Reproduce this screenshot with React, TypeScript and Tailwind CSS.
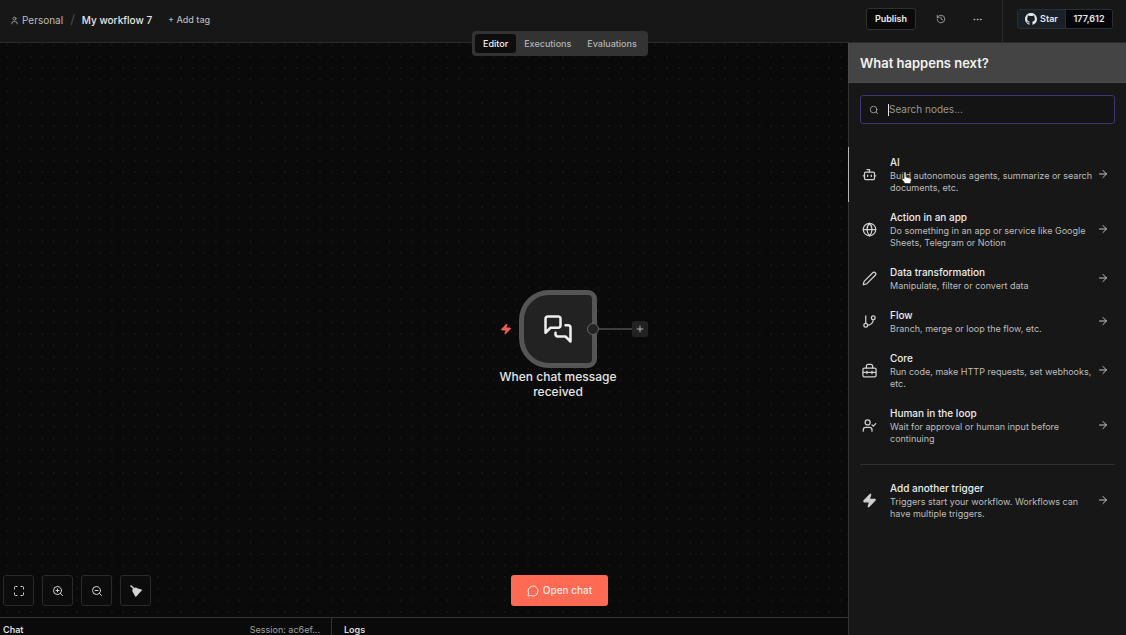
import React from 'react';
import {
  ArrowRight,
  Bot,
  Ellipsis,
  Globe,
  History,
  Maximize,
  MessageCircle,
  Plus,
  Search,
  User,
  UserCheck,
  Zap,
  ZoomIn,
  ZoomOut
} from 'lucide-react';

interface NodeCategory {
  id: string;
  title: string;
  description: string;
  icon: React.ReactNode;
}

interface StrokeIconProps {
  className?: string;
  children: React.ReactNode;
}

const StrokeIcon: React.FC<StrokeIconProps> = ({ className = 'size-[15px]', children }) => (
  <svg
    className={className}
    viewBox="0 0 24 24"
    fill="none"
    stroke="currentColor"
    strokeWidth={2}
    strokeLinecap="round"
    strokeLinejoin="round"
    aria-hidden="true"
  >
    {children}
  </svg>
);

const categories: NodeCategory[] = [
  {
    id: 'ai',
    title: 'AI',
    description: 'Build autonomous agents, summarize or search documents, etc.',
    icon: <Bot className="size-[15px]" />
  },
  {
    id: 'action',
    title: 'Action in an app',
    description: 'Do something in an app or service like Google Sheets, Telegram or Notion',
    icon: <Globe className="size-[15px]" />
  },
  {
    id: 'transform',
    title: 'Data transformation',
    description: 'Manipulate, filter or convert data',
    icon: (
      <StrokeIcon>
        <path d="M21.2 6.8a1 1 0 0 0-4-4L3.8 16.2a2 2 0 0 0-.5.8L2 21.4a.5.5 0 0 0 .6.6L7 20.7a2 2 0 0 0 .8-.5z" />
      </StrokeIcon>
    )
  },
  {
    id: 'flow',
    title: 'Flow',
    description: 'Branch, merge or loop the flow, etc.',
    icon: (
      <StrokeIcon>
        <path d="M6 3v12" />
        <circle cx="18" cy="6" r="3" />
        <circle cx="6" cy="18" r="3" />
        <path d="M18 9a9 9 0 0 1-9 9" />
      </StrokeIcon>
    )
  },
  {
    id: 'core',
    title: 'Core',
    description: 'Run code, make HTTP requests, set webhooks, etc.',
    icon: (
      <StrokeIcon>
        <rect x="1.5" y="8" width="21" height="14" rx="2" />
        <path d="M7 8V5a3 3 0 0 1 3-3h4a3 3 0 0 1 3 3v3" />
        <path d="M2 15h20M8 13v4M16 13v4" />
      </StrokeIcon>
    )
  },
  {
    id: 'human',
    title: 'Human in the loop',
    description: 'Wait for approval or human input before continuing',
    icon: <UserCheck className="size-[15px]" />
  }
];

const triggerCategory: NodeCategory = {
  id: 'trigger',
  title: 'Add another trigger',
  description: 'Triggers start your workflow. Workflows can have multiple triggers.',
  icon: <Zap className="size-[15px]" fill="currentColor" />
};

const CategoryItem: React.FC<{ item: NodeCategory; active?: boolean }> = ({ item, active = false }) => (
  <button
    className={`flex w-full items-center border-l py-2 pr-[17px] pl-[13px] text-left ${
      active ? 'border-[#b5b5b5]' : 'border-[#333333]'
    }`}
  >
    <span className="pb-px text-[#d0d0d0]">{item.icon}</span>
    <span className="ml-[13px] min-w-0 flex-1">
      <span className="block text-[10px] leading-[15px] font-medium text-[#ececec]">{item.title}</span>
      <span className="block text-[9px] leading-[12px] text-[#bdbdbd]">{item.description}</span>
    </span>
    <ArrowRight className="mb-px size-3 shrink-0 text-[#c4c4c4]" />
  </button>
);

const HandCursor: React.FC = () => (
  <svg className="pointer-events-none absolute top-[24px] left-[53px] h-[14px] w-[11px]" viewBox="0 0 22 28" aria-hidden="true">
    <path
      d="M6 3.500C6 1.500 10 1.500 10 3.500V12l8 2c2 .5 3 2 2.500 4L19 25H8L2 17c-1-2 1-3.500 3-2l1 1z"
      fill="#ffffff"
      stroke="#333333"
      strokeWidth="1.500"
    />
  </svg>
);

const NodePanel: React.FC = () => (
  <aside className="flex w-[278px] shrink-0 flex-col bg-[#171717]">
    <h2 className="border-l border-b border-[#4a4a4a] bg-[#444444] px-[11px] pt-[10px] pb-[9px] text-[13px] leading-5 font-semibold text-[#f2f2f2]">
      What happens next?
    </h2>
    <div className="border-l border-[#333333] px-[11px] pt-3 pb-[23px]">
      <label className="relative flex h-[29px] items-center rounded-[3px] border border-[#3d3872] bg-[#141414] px-2">
        <Search className="size-[10px] text-[#a8a8a8]" />
        <span className="ml-[9px] h-3 w-px bg-[#e5e5e5]" />
        <input
          type="text"
          aria-label="Search nodes"
          placeholder="Search nodes..."
          className="min-w-0 flex-1 bg-transparent text-[10px] text-white outline-none placeholder:text-[#969696]"
        />
      </label>
    </div>
    <div className="relative">
      {categories.map((item) => (
        <CategoryItem key={item.id} item={item} active={item.id === 'ai'} />
      ))}
      <HandCursor />
    </div>
    <div className="border-l border-[#333333] px-[11px] pt-[11px] pb-2">
      <hr className="border-[#303030]" />
    </div>
    <CategoryItem item={triggerCategory} />
    <div className="flex-1 border-l border-[#333333]" />
  </aside>
);

const Header: React.FC = () => (
  <header className="flex h-[43px] shrink-0 items-stretch border-b border-[#2b2b2b] bg-[#171717]">
    <div className="flex flex-1 items-center pb-[2px] pl-[10px]">
      <User className="size-[9px] text-[#b5b5b5]" />
      <a href="#personal" className="ml-[3px] text-[10px] text-[#bdbdbd]">Personal</a>
      <span className="mx-[7px] text-[13px] text-[#4a4a4a]">/</span>
      <span className="text-[10px] font-medium text-[#e5e5e5]">My workflow 7</span>
      <button className="ml-4 text-[9px] font-medium text-[#b5b5b5]">+ Add tag</button>
    </div>
    <div className="flex items-center pb-1">
      <button className="h-[22px] w-[50px] rounded-[3px] border border-[#303030] bg-[#0a0a0a] text-[9px] font-semibold text-[#eeeeee]">
        Publish
      </button>
      <button aria-label="Workflow history" className="ml-5 text-[#a8a8a8]">
        <History className="size-[10px]" />
      </button>
      <button aria-label="More actions" className="mr-[19px] ml-[26px] text-[#b5b5b5]">
        <Ellipsis className="size-[11px]" />
      </button>
    </div>
    <div className="flex w-[124px] items-center border-l border-[#2b2b2b] pb-[5px] pl-[14px]">
      <a
        href="#star"
        className="flex h-5 items-center overflow-hidden rounded-[3px] border border-[#2a2f36] text-[9px] font-semibold text-[#e6e6e6]"
      >
        <span className="flex h-full w-[47px] items-center justify-center gap-[3px] bg-[#1a2028]">
          <svg className="size-3" viewBox="0 0 16 16" fill="currentColor" aria-hidden="true">
            <path d="M8 0C3.580 0 0 3.580 0 8c0 3.540 2.290 6.530 5.470 7.590.4.070.55-.17.55-.38 0-.19-.01-.82-.01-1.490-2.010.37-2.530-.49-2.690-.94-.09-.23-.48-.94-.82-1.130-.28-.15-.68-.52-.01-.53.63-.01 1.080.58 1.230.82.72 1.210 1.870.87 2.330.66.070-.52.28-.87.51-1.070-1.780-.2-3.640-.89-3.640-3.950 0-.87.31-1.590.82-2.150-.08-.2-.36-1.020.08-2.120 0 0 .67-.21 2.200.82.64-.18 1.320-.27 2-.27s1.360.09 2 .27c1.530-1.040 2.200-.82 2.200-.82.44 1.100.16 1.920.08 2.120.51.56.82 1.270.82 2.150 0 3.070-1.870 3.750-3.650 3.950.29.25.54.73.54 1.480 0 1.070-.01 1.930-.01 2.200 0 .21.15.46.55.38A8.010 8.010 0 0 0 16 8c0-4.420-3.580-8-8-8" />
          </svg>
          Star
        </span>
        <span className="flex h-full w-[47px] items-center justify-center border-l border-[#2a2f36] bg-[#04060c]">177,612</span>
      </a>
    </div>
  </header>
);

const ViewTabs: React.FC = () => (
  <nav className="absolute top-[31px] left-[472px] z-10 flex rounded-[4px] bg-[#333333] p-[3px] text-[9px] leading-[19px] font-medium text-[#b5b5b5]">
    <button className="rounded-[3px] bg-[#0d0d0d] px-2 text-[#f2f2f2]">Editor</button>
    <button className="px-2">Executions</button>
    <button className="px-2">Evaluations</button>
  </nav>
);

const CanvasDots: React.FC = () => (
  <svg className="absolute inset-0 size-full" aria-hidden="true">
    <pattern id="dots" x="1.800" y="1" width="11.570" height="11.570" patternUnits="userSpaceOnUse">
      <circle cx="5.800" cy="0.800" r="0.600" fill="#333333" />
    </pattern>
    <rect width="100%" height="100%" fill="url(#dots)" />
  </svg>
);

const TriggerNode: React.FC = () => (
  <div className="absolute top-[247px] left-[498px] w-[150px]">
    <div className="flex items-center">
      <Zap className="mr-[7px] ml-[2px] size-3 text-[#f0604f]" fill="currentColor" />
      <div className="flex size-[78px] shrink-0 items-center justify-center rounded-l-[30px] rounded-r-[9px] border-[5px] border-[#555555] bg-[#222222]">
        <StrokeIcon className="size-[30px] text-[#eeeeee]">
          <path d="M14 9a2 2 0 0 1-2 2H6l-4 4V4a2 2 0 0 1 2-2h8a2 2 0 0 1 2 2z" />
          <path d="M18 9h2a2 2 0 0 1 2 2v11l-4-4h-6a2 2 0 0 1-2-2v-1" />
        </StrokeIcon>
      </div>
      <span className="relative -ml-[10px] size-3 shrink-0 rounded-full border border-[#666666] bg-[#222222]" />
      <span className="h-[2px] flex-1 bg-[#3d3d3d]" />
      <button
        aria-label="Add node"
        className="flex size-4 shrink-0 items-center justify-center rounded-[3px] bg-[#222222] text-[#cfcfcf]"
      >
        <Plus className="size-[10px]" />
      </button>
    </div>
    <p className="mt-px w-[120px] text-center text-[12px] leading-[15px] font-medium text-[#e5e5e5]">
      When chat message received
    </p>
  </div>
);

const controlClass =
  'flex size-[31px] items-center justify-center rounded-[3px] border border-[#2a2a2a] bg-[#0c0c0c] text-[#d4d4d4]';

const CanvasControls: React.FC = () => (
  <div className="absolute bottom-[11px] left-[3px] flex gap-2">
    <button aria-label="Zoom to fit" className={controlClass}>
      <Maximize className="size-3" />
    </button>
    <button aria-label="Zoom in" className={controlClass}>
      <ZoomIn className="size-3" />
    </button>
    <button aria-label="Zoom out" className={controlClass}>
      <ZoomOut className="size-3" />
    </button>
    <button aria-label="Tidy up" className={controlClass}>
      <svg className="size-3" viewBox="0 0 24 24" fill="currentColor" aria-hidden="true">
        <path d="M0 2 2 0l7 6 3-1.500 2 2L23 9c1 .4 1.200 1.500.5 2.200L12.500 23c-.8.800-2 .600-2.300-.5L5 13l-.5-3L6 7.500z" />
      </svg>
    </button>
  </div>
);

export default function App() {
  return (
    <div className="relative flex h-screen flex-col overflow-hidden bg-[#0a0a0a] font-['Inter',sans-serif]">
      <Header />
      <ViewTabs />
      <div className="flex min-h-0 flex-1">
        <main className="flex min-w-0 flex-1 flex-col">
          <div className="relative flex-1 overflow-hidden">
            <CanvasDots />
            <TriggerNode />
            <CanvasControls />
            <button className="absolute bottom-[11px] left-[511px] flex h-[31px] w-[97px] items-center justify-center gap-1 rounded-[3px] bg-[#ff6a55] text-[10px] font-medium text-[#ffe9e5]">
              <MessageCircle className="size-3" />
              Open chat
            </button>
          </div>
          <footer className="flex h-[18px] shrink-0 overflow-hidden border-t border-[#333333] text-[9px] leading-[23px] font-semibold text-[#dddddd]">
            <div className="flex w-[332px] justify-between border-r border-[#333333] pr-[11px] pl-[3px]">
              <span>Chat</span>
              <span className="font-normal text-[#a0a0a0]">Session: ac6ef...</span>
            </div>
            <span className="pl-3">Logs</span>
          </footer>
        </main>
        <NodePanel />
      </div>
    </div>
  );
}
